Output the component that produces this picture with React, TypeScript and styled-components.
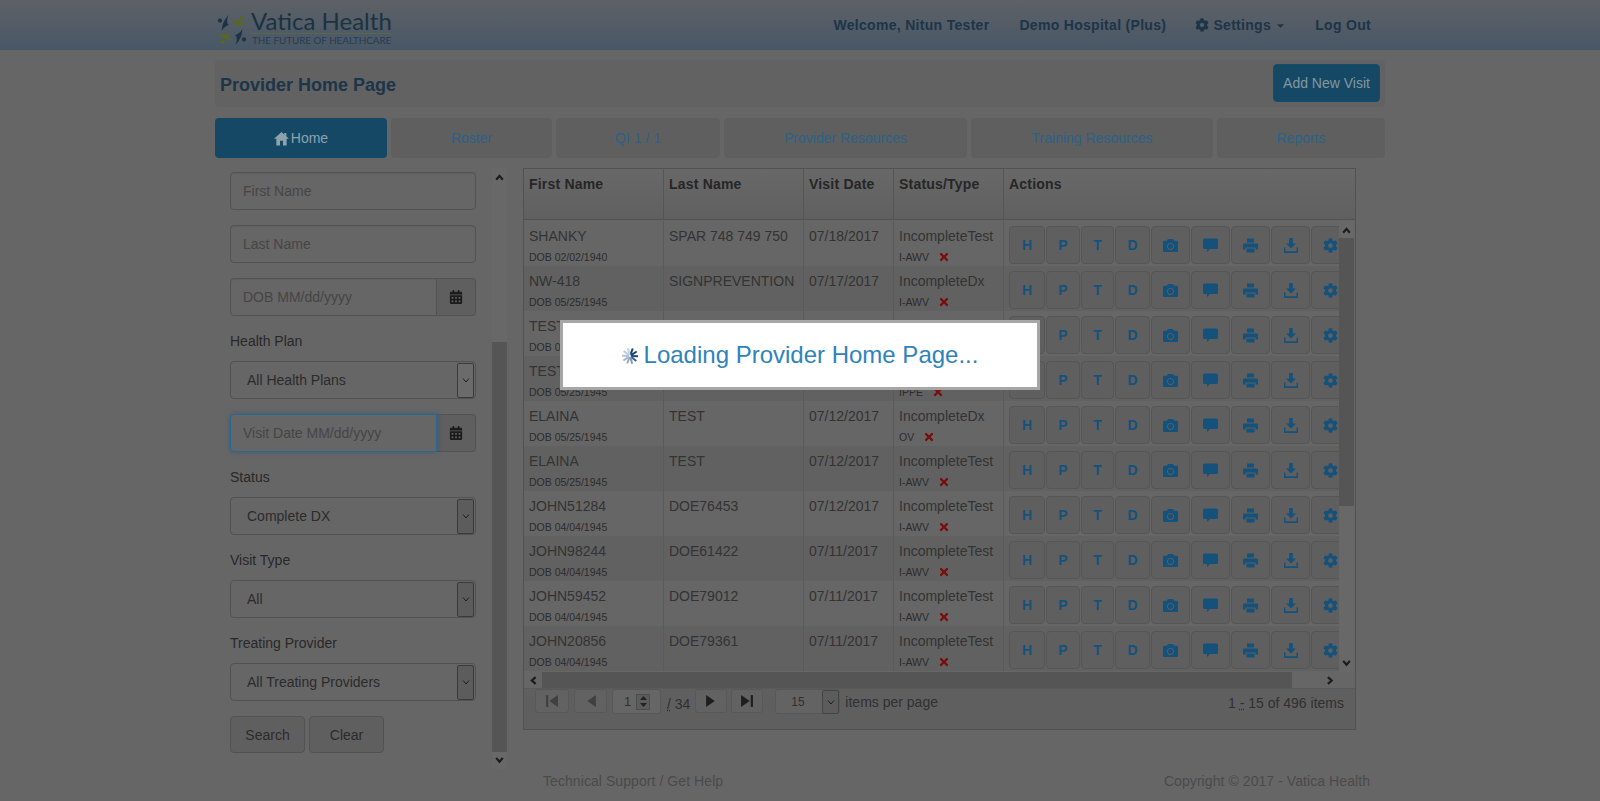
import React from "react";
import styled, { createGlobalStyle } from "styled-components";
import { FaCog, FaCalendarAlt, FaCamera, FaTimes, FaCaretDown } from "react-icons/fa";

const Global = createGlobalStyle`
  html, body { margin: 0; padding: 0; height: 801px; overflow: hidden; background: #666; }
  body { font-family: "Liberation Sans", Arial, sans-serif; font-size: 14px; color: #262626; }
  * { box-sizing: border-box; }
`;

const HeaderBar = styled.header`
  height: 50px;
  background: linear-gradient(#5e6166, #485767);
`;
const Container = styled.div`
  width: 1170px;
  margin: 0 auto;
`;
const HeaderInner = styled(Container)`
  display: flex;
  align-items: center;
  justify-content: space-between;
  height: 50px;
`;
const LogoWrap = styled.div`
  display: flex;
  align-items: flex-start;
  margin: 6px 0 0 1px;
  height: 40px;
  svg { flex: none; margin-top: 6px; }
`;
const LogoText = styled.div`
  margin-left: 2px;
  color: #1b3242;
`;
const LogoName = styled.div`
  font-family: "Lato", sans-serif;
  font-size: 24px;
  line-height: 25px;
  padding-left: 1px;
  white-space: nowrap;
`;
const LogoTag = styled.div`
  border-top: 1px solid #55684a;
  font-family: "Lato", sans-serif;
  font-size: 9.8px;
  line-height: 12px;
  padding-left: 2px;
  color: #263d4e;
  white-space: nowrap;
`;
const Nav = styled.nav`
  display: flex;
  align-items: center;
  margin-right: 14px;
`;
const NavItem = styled.span<{ $gap: number }>`
  display: inline-flex;
  align-items: center;
  margin-left: ${(p) => p.$gap}px;
  font-weight: bold;
  font-size: 14px;
  letter-spacing: 0.3px;
  color: #1c3547;
  white-space: nowrap;
  svg { flex: none; }
`;

const TitleBar = styled.div`
  display: flex;
  align-items: center;
  justify-content: space-between;
  height: 47px;
  margin-top: 10px;
  padding: 0 5px;
  background: #626262;
  border-radius: 4px;
`;
const Title = styled.h1`
  margin: 2px 0 0;
  font-size: 18px;
  line-height: 24px;
  font-weight: bold;
  color: #1c3549;
`;
const PrimaryButton = styled.button`
  width: 107px;
  height: 38px;
  margin-top: -1px;
  padding: 0;
  font: 14px "Liberation Sans", Arial, sans-serif;
  color: #84979f;
  background: #144865;
  border: 1px solid #154c6a;
  border-radius: 4px;
`;

const Tabs = styled.div`
  display: grid;
  grid-template-columns: 172px 161px 164px 243px 242px 168px;
  column-gap: 4px;
  margin-top: 11px;
`;
const Tab = styled.div<{ $active?: boolean }>`
  display: flex;
  align-items: center;
  justify-content: center;
  height: 40px;
  border-radius: 4px;
  background: ${(p) => (p.$active ? "#144865" : "#5f5f5f")};
  color: ${(p) => (p.$active ? "#8ea2ad" : "#2a6289")};
  font-size: 14px;
  svg { margin-right: 2px; }
`;

const Main = styled.main`
  display: flex;
  height: 601px;
  margin-top: 10px;
`;
const Sidebar = styled.aside`
  display: flex;
  width: 292px;
  height: 601px;
  padding-left: 15px;
`;
const FilterForm = styled.form`
  display: flex;
  flex-direction: column;
  gap: 15px;
  width: 246px;
  padding-top: 4px;
`;
const Group = styled.div`
  display: flex;
  flex-direction: column;
  gap: 10px;
`;
const Label = styled.label`
  font-size: 14px;
  line-height: 20px;
  color: #282828;
`;
const TextInput = styled.input<{ $focus?: boolean; $addon?: boolean }>`
  display: block;
  width: 100%;
  height: 38px;
  padding: 0 12px;
  font: 14px "Liberation Sans", Arial, sans-serif;
  color: #262626;
  background: #666;
  outline: none;
  border: 1px solid ${(p) => (p.$focus ? "#2a6794" : "#525252")};
  border-radius: ${(p) => (p.$addon ? "4px 0 0 4px" : "4px")};
  box-shadow: ${(p) => (p.$focus ? "0 0 5px rgba(30,85,125,.6)" : "inset 0 1px 1px rgba(0,0,0,.05)")};
  position: relative;
  &::placeholder { color: #454545; opacity: 1; }
`;
const DateRow = styled.div`
  display: flex;
`;
const DateInputWrap = styled.div`
  width: 207px;
`;
const Addon = styled.span`
  display: flex;
  align-items: center;
  justify-content: center;
  width: 39px;
  height: 38px;
  color: #1c1c1c;
  background: #5f5f5f;
  border: 1px solid #525252;
  border-left: 0;
  border-radius: 0 4px 4px 0;
`;
const SelectBox = styled.div`
  display: flex;
  align-items: center;
  justify-content: space-between;
  height: 38px;
  padding: 0 1px 0 16px;
  background: #666;
  border: 1px solid #525252;
  border-radius: 4px;
  color: #2b2b2b;
`;
const SelectArrow = styled.span<{ $light?: boolean }>`
  display: flex;
  align-items: center;
  justify-content: center;
  width: 17px;
  height: 35px;
  background: ${(p) => (p.$light ? "#6b6b6b" : "#5c5c5c")};
  border: 1px solid #3a3a3a;
  border-radius: 2px;
`;
const ButtonRow = styled.div`
  display: flex;
  gap: 4px;
`;
const PlainButton = styled.button`
  width: 75px;
  height: 37px;
  padding: 0;
  font: 14px "Liberation Sans", Arial, sans-serif;
  color: #2b2b2b;
  background: #5f5f5f;
  border: 1px solid #525252;
  border-radius: 4px;
`;
const VScroll = styled.div<{ $w: number; $thumbTop: number; $thumbH: number; $ml?: number }>`
  display: flex;
  flex: none;
  flex-direction: column;
  align-items: center;
  justify-content: space-between;
  width: ${(p) => p.$w}px;
  margin-left: ${(p) => p.$ml ?? 0}px;
  padding: 4px 0;
  background-color: #686868;
  background-image: linear-gradient(#555, #555);
  background-repeat: no-repeat;
  background-size: 100% ${(p) => p.$thumbH}px;
  background-position: 0 ${(p) => p.$thumbTop}px;
`;

const columns = "139px 140px 90px 110px 1fr";
const Grid = styled.section`
  display: flex;
  flex-direction: column;
  width: 833px;
  height: 562px;
  margin-left: 16px;
  background: #5f5f5f;
  border: 1px solid #525252;
`;
const HeadRow = styled.div`
  display: grid;
  grid-template-columns: ${columns};
  height: 51px;
  flex: none;
  background: linear-gradient(#686868, #606060);
  border-bottom: 1px solid #525252;
`;
const HeadCell = styled.div`
  padding: 6px 5px 0;
  border-left: 1px solid #555;
  font-weight: bold;
  font-size: 14px;
  line-height: 18px;
  letter-spacing: 0.2px;
  color: #262626;
  &:first-child { border-left: 0; }
`;
const BodyWrap = styled.div`
  display: flex;
  flex: none;
  height: 452px;
  padding-top: 1px;
  background: #666;
`;
const Rows = styled.div`
  width: 815px;
  flex: none;
  overflow: hidden;
`;
const Row = styled.div<{ $alt?: boolean }>`
  display: grid;
  grid-template-columns: ${columns};
  height: 45px;
  background: ${(p) => (p.$alt ? "#616161" : "#666")};
`;
const Cell = styled.div`
  padding: 5px 5px 0;
  border-left: 1px solid #5a5a5a;
  font-size: 14px;
  line-height: 20px;
  color: #333;
  white-space: nowrap;
  overflow: hidden;
  &:first-child { border-left: 0; }
`;
const Small = styled.div`
  display: flex;
  align-items: center;
  font-size: 10.5px;
  line-height: 16px;
  margin-top: 3px;
  color: #2c2c2c;
  svg { color: #7a0c0c; margin-left: 9px; margin-top: -1px; }
`;
const Actions = styled.div`
  display: flex;
  gap: 1px;
  padding: 5px 0 0 5px;
  border-left: 1px solid #5a5a5a;
  overflow: hidden;
`;
const ActionBtn = styled.span<{ $w: number }>`
  display: flex;
  flex: none;
  align-items: center;
  justify-content: center;
  width: ${(p) => p.$w}px;
  height: 38px;
  font-weight: bold;
  font-size: 14px;
  color: #15527b;
  background: #5f5f5f;
  border: 1px solid #565656;
  border-radius: 4px;
`;
const HScroll = styled.div`
  display: flex;
  align-items: center;
  flex: none;
  height: 16px;
  background: #666;
`;
const HArrow = styled.span<{ $w: number; $pr?: number }>`
  display: flex;
  align-items: center;
  justify-content: ${(p) => (p.$pr ? "flex-end" : "center")};
  width: ${(p) => p.$w}px;
  padding-right: ${(p) => p.$pr ?? 0}px;
  flex: none;
`;
const HThumb = styled.span`
  width: 750px;
  height: 16px;
  background: #555;
`;
const Pager = styled.div`
  display: flex;
  flex: none;
  align-items: flex-start;
  height: 41px;
  padding: 0 11px;
  border-top: 1px solid #5a5a5a;
  font-size: 14px;
  color: #303030;
`;
const PagerBtn = styled.span<{ $w: number; $ml: number; $dim?: boolean }>`
  display: flex;
  align-items: center;
  justify-content: center;
  width: ${(p) => p.$w}px;
  height: 24px;
  margin-left: ${(p) => p.$ml}px;
  color: ${(p) => (p.$dim ? "#404040" : "#1e1e1e")};
  background: #626262;
  border: 1px solid #585858;
  border-radius: 3px;
`;
const Numeric = styled.span`
  display: flex;
  align-items: center;
  justify-content: space-between;
  width: 49px;
  height: 25px;
  margin-left: 5px;
  padding: 0 10px 0 11px;
  font-size: 13px;
  background: #666;
  border: 1px solid #585858;
  border-radius: 3px;
`;
const Spin = styled.span`
  display: flex;
  flex-direction: column;
  width: 14px;
  height: 16px;
  background: #5c5c5c;
  border: 1px solid #4c4c4c;
  align-items: center;
  justify-content: space-around;
`;
const PageTotal = styled.span`
  margin: 7px 5px 0 6px;
  white-space: nowrap;
`;
const DottedAbbr = styled.abbr`
  text-decoration: underline dotted;
`;
const PerPage = styled.span`
  display: flex;
  align-items: center;
  justify-content: space-between;
  width: 65px;
  height: 25px;
  margin-left: 12px;
  padding-left: 15px;
  font-size: 12px;
  background: #636363;
  border: 1px solid #585858;
  border-radius: 3px;
`;
const PerArrow = styled.span`
  display: flex;
  align-items: center;
  justify-content: center;
  width: 17px;
  height: 24px;
  background: #5c5c5c;
  border: 1px solid #444;
  border-radius: 2px;
`;
const PerLabel = styled.span`
  margin: 5px 0 0 5px;
`;
const PagerInfo = styled.span`
  margin: 6px 0 0 auto;
`;

const Footer = styled.footer`
  display: flex;
  justify-content: space-between;
  margin-top: 2px;
  padding: 0 15px 0 328px;
  line-height: 20px;
  font-size: 14px;
  letter-spacing: 0.07px;
  color: #4a4a4a;
`;

const ModalBox = styled.div`
  position: fixed;
  left: 560px;
  top: 320px;
  width: 480px;
  height: 70px;
  display: flex;
  align-items: center;
  justify-content: center;
  background: #fff;
  border: 3px solid #a6a6a6;
  font-size: 24px;
  color: #2e83bb;
  svg { margin-right: 6px; margin-top: 2px; }
`;

const Chevron = ({ dir, size = 10, color = "#1d1d1d", sw = 2 }: { dir: "up" | "down" | "left" | "right"; size?: number; color?: string; sw?: number }) => {
  const pts = { up: "2,7 5,3.5 8,7", down: "2,3.5 5,7 8,3.5", left: "7,2 3.5,5 7,8", right: "3.5,2 7,5 3.5,8" }[dir];
  return (
    <svg width={size} height={size} viewBox="0 0 10 10">
      <polyline points={pts} fill="none" stroke={color} strokeWidth={sw} />
    </svg>
  );
};

const Logo = () => (
  <svg width="32" height="32" viewBox="0 0 34 34">
    {[0, 90, 180, 270].map((a, i) => (
      <g key={a} transform={`rotate(${a} 17 17)`} fill={i % 2 === 0 ? "#1d3342" : "#55691f"}>
        <circle cx="4.2" cy="7" r="2.2" />
        <path d="M13.5 1 C9.5 5 6.5 10 6 18 C8 14.5 10.5 12.5 14 11.5 C11.5 11 11 6 13.5 1Z" />
      </g>
    ))}
  </svg>
);

const HomeIcon = () => (
  <svg width="15" height="15" viewBox="0 0 16 16" fill="currentColor">
    <path d="M8 1 L16 8.2 H13.5 V15.5 H9.6 V10.5 H6.4 V15.5 H2.5 V8.2 H0 Z" />
    <path d="M11 2 h2.2 v4 L11 4 Z" />
  </svg>
);
const Gear = ({ size = 15 }: { size?: number }) => <FaCog size={size} />;
const CommentIcon = () => (
  <svg width="15" height="14" viewBox="0 0 15 14" fill="currentColor">
    <path d="M1.5 0.5h12a1.5 1.5 0 0 1 1.5 1.5v7.5a1.5 1.5 0 0 1-1.5 1.5H7l-3 3v-3H1.5A1.5 1.5 0 0 1 0 9.5V2A1.5 1.5 0 0 1 1.5 0.5Z" />
  </svg>
);
const PrintIcon = () => (
  <svg width="15" height="15" viewBox="0 0 15 15" fill="currentColor">
    <path d="M4 0.5h7v4H4Z" />
    <path d="M1 5.5h13a1 1 0 0 1 1 1v5h-2.5V9.5h-10v2H0v-5a1 1 0 0 1 1-1Z" />
    <path d="M3.5 10.5h8v4h-8Z" />
  </svg>
);
const DownloadIcon = () => (
  <svg width="14" height="15" viewBox="0 0 14 15" fill="currentColor">
    <path d="M5.2 0h3.6v5.5H12L7 10.5 2 5.5h3.2Z" />
    <path d="M0 9.5h1.5v3.7h11V9.5H14V15H0Z" />
  </svg>
);
const Triangle = ({ dir, bar }: { dir: "l" | "r"; bar?: boolean }) => (
  <svg width="14" height="14" viewBox="0 0 13 13" fill="currentColor">
    {dir === "l" ? <path d={bar ? "M12 1v11L4 6.5Z" : "M11 1v11L3 6.5Z"} /> : <path d={bar ? "M1 1v11L9 6.5Z" : "M2 1v11L10 6.5Z"} />}
    {bar && <rect x={dir === "l" ? 1 : 10} y="1" width="2" height="11" />}
  </svg>
);
const Spinner = () => {
  const shades = ["#16406f", "#16406f", "#1d4a7c", "#3a6394", "#7f98b8", "#93a9c4", "#a3b6cc", "#b3c3d5", "#bccade", "#c6d2e0"];
  return (
    <svg width="16" height="16" viewBox="-8 -8 16 16">
      {shades.map((c, i) => (
        <rect key={i} x="-1" y="-8" width="2" height="7" fill={c} transform={`rotate(${20 + i * 36})`} />
      ))}
    </svg>
  );
};

type R = { first: string; dob: string; last: string; date: string; status: string; type: string };
const rows: R[] = [
  { first: "SHANKY", dob: "02/02/1940", last: "SPAR 748 749 750", date: "07/18/2017", status: "IncompleteTest", type: "I-AWV" },
  { first: "NW-418", dob: "05/25/1945", last: "SIGNPREVENTION", date: "07/17/2017", status: "IncompleteDx", type: "I-AWV" },
  { first: "TEST", dob: "05/25/1945", last: "TEST", date: "07/13/2017", status: "IncompleteDx", type: "IPPE" },
  { first: "TEST", dob: "05/25/1945", last: "TEST", date: "07/13/2017", status: "IncompleteDx", type: "IPPE" },
  { first: "ELAINA", dob: "05/25/1945", last: "TEST", date: "07/12/2017", status: "IncompleteDx", type: "OV" },
  { first: "ELAINA", dob: "05/25/1945", last: "TEST", date: "07/12/2017", status: "IncompleteTest", type: "I-AWV" },
  { first: "JOHN51284", dob: "04/04/1945", last: "DOE76453", date: "07/12/2017", status: "IncompleteTest", type: "I-AWV" },
  { first: "JOHN98244", dob: "04/04/1945", last: "DOE61422", date: "07/11/2017", status: "IncompleteTest", type: "I-AWV" },
  { first: "JOHN59452", dob: "04/04/1945", last: "DOE79012", date: "07/11/2017", status: "IncompleteTest", type: "I-AWV" },
  { first: "JOHN20856", dob: "04/04/1945", last: "DOE79361", date: "07/11/2017", status: "IncompleteTest", type: "I-AWV" },
];

const actionButtons: { w: number; node: React.ReactNode }[] = [
  { w: 36, node: "H" },
  { w: 34, node: "P" },
  { w: 33, node: "T" },
  { w: 35, node: "D" },
  { w: 39, node: <FaCamera size={15} /> },
  { w: 39, node: <CommentIcon /> },
  { w: 39, node: <PrintIcon /> },
  { w: 39, node: <DownloadIcon /> },
  { w: 39, node: <Gear /> },
];

const Filter = ({ label, value, light }: { label: string; value: string; light?: boolean }) => (
  <Group>
    <Label>{label}</Label>
    <SelectBox>
      {value}
      <SelectArrow $light={light}>
        <Chevron dir="down" size={10} sw={1} />
      </SelectArrow>
    </SelectBox>
  </Group>
);

const DateField = ({ placeholder, focus }: { placeholder: string; focus?: boolean }) => (
  <DateRow>
    <DateInputWrap>
      <TextInput $addon $focus={focus} placeholder={placeholder} readOnly />
    </DateInputWrap>
    <Addon>
      <FaCalendarAlt size={14} />
    </Addon>
  </DateRow>
);

export default function App() {
  return (
    <>
      <Global />
      <HeaderBar>
        <HeaderInner>
          <LogoWrap>
            <Logo />
            <LogoText>
              <LogoName>Vatica Health</LogoName>
              <LogoTag>THE FUTURE OF HEALTHCARE</LogoTag>
            </LogoText>
          </LogoWrap>
          <Nav>
            <NavItem $gap={0}>Welcome, Nitun Tester</NavItem>
            <NavItem $gap={30}>Demo Hospital (Plus)</NavItem>
            <NavItem $gap={29}>
              <Gear size={14} />
              &nbsp;Settings&nbsp;
              <FaCaretDown size={11} />
            </NavItem>
            <NavItem $gap={29}>Log Out</NavItem>
          </Nav>
        </HeaderInner>
      </HeaderBar>
      <Container>
        <TitleBar>
          <Title>Provider Home Page</Title>
          <PrimaryButton>Add New Visit</PrimaryButton>
        </TitleBar>
        <Tabs>
          <Tab $active>
            <HomeIcon />
            Home
          </Tab>
          <Tab>Roster</Tab>
          <Tab>QI 1 / 1</Tab>
          <Tab>Provider Resources</Tab>
          <Tab>Training Resources</Tab>
          <Tab>Reports</Tab>
        </Tabs>
        <Main>
          <Sidebar>
            <FilterForm>
              <TextInput placeholder="First Name" readOnly />
              <TextInput placeholder="Last Name" readOnly />
              <DateField placeholder="DOB MM/dd/yyyy" />
              <Filter label="Health Plan" value="All Health Plans" light />
              <DateField placeholder="Visit Date MM/dd/yyyy" focus />
              <Filter label="Status" value="Complete DX" />
              <Filter label="Visit Type" value="All" />
              <Filter label="Treating Provider" value="All Treating Providers" />
              <ButtonRow>
                <PlainButton type="button">Search</PlainButton>
                <PlainButton type="button">Clear</PlainButton>
              </ButtonRow>
            </FilterForm>
            <VScroll $w={15} $ml={16} $thumbTop={174} $thumbH={410}>
              <Chevron dir="up" size={11} />
              <Chevron dir="down" size={11} />
            </VScroll>
          </Sidebar>
          <Grid>
            <HeadRow>
              <HeadCell>First Name</HeadCell>
              <HeadCell>Last Name</HeadCell>
              <HeadCell>Visit Date</HeadCell>
              <HeadCell>Status/Type</HeadCell>
              <HeadCell>Actions</HeadCell>
            </HeadRow>
            <BodyWrap>
              <Rows>
                {rows.map((r, i) => (
                  <Row key={i} $alt={i % 2 === 1}>
                    <Cell>
                      {r.first}
                      <Small>DOB {r.dob}</Small>
                    </Cell>
                    <Cell>{r.last}</Cell>
                    <Cell>{r.date}</Cell>
                    <Cell>
                      {r.status}
                      <Small>
                        {r.type}
                        <FaTimes size={12} />
                      </Small>
                    </Cell>
                    <Actions>
                      {actionButtons.map((b, k) => (
                        <ActionBtn key={k} $w={b.w}>
                          {b.node}
                        </ActionBtn>
                      ))}
                    </Actions>
                  </Row>
                ))}
              </Rows>
              <VScroll $w={15} $thumbTop={17} $thumbH={268}>
                <Chevron dir="up" size={11} />
                <Chevron dir="down" size={11} />
              </VScroll>
            </BodyWrap>
            <HScroll>
              <HArrow $w={18}>
                <Chevron dir="left" size={11} />
              </HArrow>
              <HThumb />
              <HArrow $w={63} $pr={20}>
                <Chevron dir="right" size={11} />
              </HArrow>
            </HScroll>
            <Pager>
              <PagerBtn $w={34} $ml={0} $dim>
                <Triangle dir="l" bar />
              </PagerBtn>
              <PagerBtn $w={33} $ml={5} $dim>
                <Triangle dir="l" />
              </PagerBtn>
              <Numeric>
                1
                <Spin>
                  <svg width="7" height="4" viewBox="0 0 7 4"><path d="M0 4 3.5 0 7 4Z" fill="#222" /></svg>
                  <svg width="7" height="4" viewBox="0 0 7 4"><path d="M0 0 3.5 4 7 0Z" fill="#222" /></svg>
                </Spin>
              </Numeric>
              <PageTotal>
                <DottedAbbr>/</DottedAbbr> 34
              </PageTotal>
              <PagerBtn $w={32} $ml={0}>
                <Triangle dir="r" />
              </PagerBtn>
              <PagerBtn $w={32} $ml={4}>
                <Triangle dir="r" bar />
              </PagerBtn>
              <PerPage>
                15
                <PerArrow>
                  <Chevron dir="down" size={10} sw={1} />
                </PerArrow>
              </PerPage>
              <PerLabel>items per page</PerLabel>
              <PagerInfo>
                1 <DottedAbbr>-</DottedAbbr> 15 of 496 items
              </PagerInfo>
            </Pager>
          </Grid>
        </Main>
        <Footer>
          <span>Technical Support / Get Help</span>
          <span>Copyright © 2017 - Vatica Health</span>
        </Footer>
      </Container>
      <ModalBox>
        <Spinner />
        Loading Provider Home Page...
      </ModalBox>
    </>
  );
}
